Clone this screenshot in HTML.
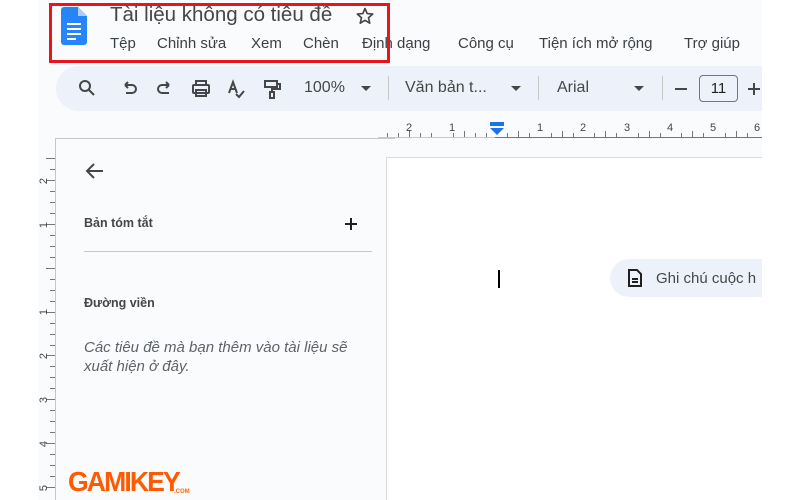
<!DOCTYPE html>
<html><head><meta charset="utf-8"><style>
*{margin:0;padding:0;box-sizing:border-box}
body{width:800px;height:500px;overflow:hidden;background:#fff;font-family:"Liberation Sans",Arial,sans-serif;position:relative}
.bg{position:absolute;left:38px;top:0;width:724px;height:500px;background:#f9fbfd;overflow:hidden}
.abs{position:absolute}
.title{left:72px;top:3px;font-size:20.5px;color:#444746;white-space:nowrap}
.menu{top:35px;font-size:15px;color:#3c4043;white-space:nowrap}
.tb{left:18px;top:66px;width:760px;height:45px;background:#edf2fa;border-radius:23px}
.tbt{font-size:16px;color:#444746;top:79px;white-space:nowrap}
.side{left:17px;top:138px;width:340px;height:362px;border-left:1px solid #c7c7c7;border-top:1px solid #c7c7c7;background:#f9fbfd}
.page{left:348px;top:157px;width:400px;height:360px;background:#fff;border:1px solid #dadce0}
</style></head><body>
<div class="bg">
  <svg class="abs" style="left:23px;top:7px" width="26" height="38" viewBox="0 0 26 38">
    <path d="M3 0h14l9 9v26a3 3 0 0 1-3 3H3a3 3 0 0 1-3-3V3a3 3 0 0 1 3-3z" fill="#2684fc"/>
    <path d="M17 0v9h9z" fill="#a9ccfb"/>
    <rect x="6" y="16" width="14" height="2" fill="#fff"/><rect x="6" y="21" width="14" height="2" fill="#fff"/><rect x="6" y="26" width="14" height="2" fill="#fff"/><rect x="6" y="31" width="9" height="2" fill="#fff"/>
  </svg>
  <div class="abs title">Tài liệu không có tiêu đề</div>
  <svg class="abs" style="left:317px;top:6px" width="20" height="20" viewBox="0 0 24 24"><path d="M12 3l2.6 6.1 6.6.6-5 4.4 1.5 6.5L12 17.2 6.3 20.6l1.5-6.5-5-4.4 6.6-.6z" fill="none" stroke="#444746" stroke-width="2" stroke-linejoin="round"/></svg>
  <div class="abs menu" style="left:72px">Tệp</div>
  <div class="abs menu" style="left:119px">Chỉnh sửa</div>
  <div class="abs menu" style="left:213px">Xem</div>
  <div class="abs menu" style="left:265px">Chèn</div>
  <div class="abs menu" style="left:324px">Định dạng</div>
  <div class="abs menu" style="left:420px">Công cụ</div>
  <div class="abs menu" style="left:501px">Tiện ích mở rộng</div>
  <div class="abs menu" style="left:646px">Trợ giúp</div>

  <div class="abs tb"></div>
  <svg class="abs" style="left:38px;top:78px" width="240" height="22" viewBox="0 0 240 22" fill="none" stroke="#444746" stroke-width="2">
    <circle cx="9" cy="8" r="5"/><path d="M13 12l5 5"/>
    <path d="M49 7h7a4 4 0 0 1 0 8h-6M49 7l3-3M49 7l3 3"/>
    <path d="M93 7h-7a4 4 0 0 0 0 8h0M93 7l-3-3M93 7l-3 3M86 15h7"/>
    <rect x="117" y="7" width="16" height="8" rx="1"/><rect x="120" y="3" width="10" height="4"/><rect x="120" y="12" width="10" height="6"/>
    <path d="M153 15l4-11 4 11M155 11h5M160 16l3 3 5-6"/>
    <rect x="189" y="3" width="12" height="6"/><path d="M201 6h3v5h-8v3"/><rect x="194" y="14" width="4" height="6"/>
  </svg>
  <div class="abs tbt" style="left:266px">100%</div>
  <svg class="abs" style="left:323px;top:86px" width="10" height="6"><path d="M0 0h10L5 5z" fill="#444746"/></svg>
  <div class="abs" style="left:350px;top:76px;width:1px;height:24px;background:#c7c7c7"></div>
  <div class="abs tbt" style="left:367px">Văn bản t...</div>
  <svg class="abs" style="left:473px;top:86px" width="10" height="6"><path d="M0 0h10L5 5z" fill="#444746"/></svg>
  <div class="abs" style="left:500px;top:76px;width:1px;height:24px;background:#c7c7c7"></div>
  <div class="abs tbt" style="left:519px">Arial</div>
  <svg class="abs" style="left:596px;top:86px" width="10" height="6"><path d="M0 0h10L5 5z" fill="#444746"/></svg>
  <div class="abs" style="left:624px;top:76px;width:1px;height:24px;background:#c7c7c7"></div>
  <div class="abs" style="left:637px;top:88px;width:12px;height:2px;background:#444746"></div>
  <div class="abs" style="left:661px;top:75px;width:39px;height:27px;border:1px solid #747775;border-radius:4px;font-size:15px;color:#1f1f1f;text-align:center;line-height:25px">11</div>
  <div class="abs" style="left:710px;top:88px;width:12px;height:2px;background:#444746"></div>
  <div class="abs" style="left:715px;top:83px;width:2px;height:12px;background:#444746"></div>

  <svg class="abs" style="left:340px;top:115px" width="384" height="25" viewBox="340 115 384 25">
    <line x1="340" y1="137.5" x2="724" y2="137.5" stroke="#c7c7c7"/>
    <line x1="457" y1="137.5" x2="724" y2="137.5" stroke="#747775"/>
    <g stroke="#747775" stroke-width="1">
      <path d="M349.5 133v4M360.5 133v4M371.5 131v6M382.5 133v4M393.5 133v4M415.5 133v4M426.5 131v6M437.5 133v4M448.5 133v4M469.5 133v4M480.5 131v6M491.5 133v4M513.5 133v4M524.5 131v6M535.5 133v4M556.5 133v4M567.5 131v6M578.5 133v4M600.5 133v4M611.5 131v6M622.5 133v4M643.5 133v4M654.5 131v6M665.5 133v4M687.5 133v4M698.5 131v6M709.5 133v4"/>
    </g>
    <g font-size="11" fill="#444746" font-family="Liberation Sans" text-anchor="middle">
      <text x="371" y="131">2</text><text x="414" y="131">1</text><text x="502" y="131">1</text><text x="545" y="131">2</text><text x="589" y="131">3</text><text x="632" y="131">4</text><text x="675" y="131">5</text><text x="719" y="131">6</text>
    </g>
    <rect x="452" y="122" width="14" height="4" fill="#1a73e8"/>
    <path d="M452 128h14l-7 7z" fill="#1a73e8"/>
  </svg>

  <svg class="abs" style="left:0;top:140px" width="18" height="360" viewBox="38 140 18 360">
    <g stroke="#747775">
      <path d="M46 158.5h9M50 169.5h5M46 180.5h9M50 191.5h5M50 202.5h5M50 213.5h5M46 224.5h9M50 235.5h5M50 246.5h5M50 257.5h5M46 268.5h9M50 279.5h5M50 290.5h5M50 301.5h5M46 312.5h9M50 323.5h5M50 334.5h5M50 345.5h5M46 355.5h9M50 366.5h5M50 377.5h5M50 388.5h5M46 399.5h9M50 410.5h5M50 421.5h5M50 432.5h5M46 443.5h9M50 454.5h5M50 465.5h5M50 476.5h5M46 487.5h9"/>
    </g>
    <g font-size="11" fill="#444746" font-family="Liberation Sans" text-anchor="middle">
      <text transform="translate(47 181) rotate(-90)">2</text>
      <text transform="translate(47 225) rotate(-90)">1</text>
      <text transform="translate(47 312) rotate(-90)">1</text>
      <text transform="translate(47 356) rotate(-90)">2</text>
      <text transform="translate(47 400) rotate(-90)">3</text>
      <text transform="translate(47 444) rotate(-90)">4</text>
      <text transform="translate(47 488) rotate(-90)">5</text>
    </g>
  </svg>

  <div class="abs side"></div>
  <svg class="abs" style="left:47px;top:161px" width="20" height="20" viewBox="0 0 20 20" fill="none" stroke="#444746" stroke-width="2"><path d="M18 10H3M9 3l-7 7 7 7"/></svg>
  <div class="abs" style="left:46px;top:216px;font-size:12.5px;color:#444746;font-weight:bold">Bản tóm tắt</div>
  <div class="abs" style="left:307px;top:223px;width:12px;height:2px;background:#1f1f1f"></div>
  <div class="abs" style="left:312px;top:218px;width:2px;height:12px;background:#1f1f1f"></div>
  <div class="abs" style="left:46px;top:251px;width:288px;height:1px;background:#c7c7c7"></div>
  <div class="abs" style="left:46px;top:296px;font-size:12.5px;color:#444746;font-weight:bold">Đường viền</div>
  <div class="abs" style="left:46px;top:338px;font-size:15px;color:#5f6368;font-style:italic;line-height:19px;width:320px">Các tiêu đề mà bạn thêm vào tài liệu sẽ<br>xuất hiện ở đây.</div>

  <div class="abs page"></div>
  <div class="abs" style="left:460px;top:270px;width:2px;height:18px;background:#000"></div>
  <div class="abs" style="left:572px;top:259px;width:200px;height:38px;background:#edf2fa;border-radius:19px"></div>
  <svg class="abs" style="left:589px;top:268px" width="16" height="20" viewBox="0 0 16 20" fill="none" stroke="#1f1f1f" stroke-width="2"><path d="M2 2h8l4 4v12H2z"/><path d="M5 11h6M5 14h6"/></svg>
  <div class="abs" style="left:618px;top:270px;font-size:15px;color:#444746;white-space:nowrap">Ghi chú cuộc h</div>

  <div class="abs" style="left:30px;top:466px;font-size:28px;font-weight:bold;color:#ff5a00;letter-spacing:-2px;white-space:nowrap;transform:scaleX(0.95);transform-origin:left">GAMIKEY</div>
  <div class="abs" style="left:136px;top:489px;font-size:6px;color:#ff6a00;font-weight:bold">.COM</div>
</div>
<div class="abs" style="left:49px;top:3px;width:341px;height:60px;border:3px solid #e8141e"></div>
</body></html>
